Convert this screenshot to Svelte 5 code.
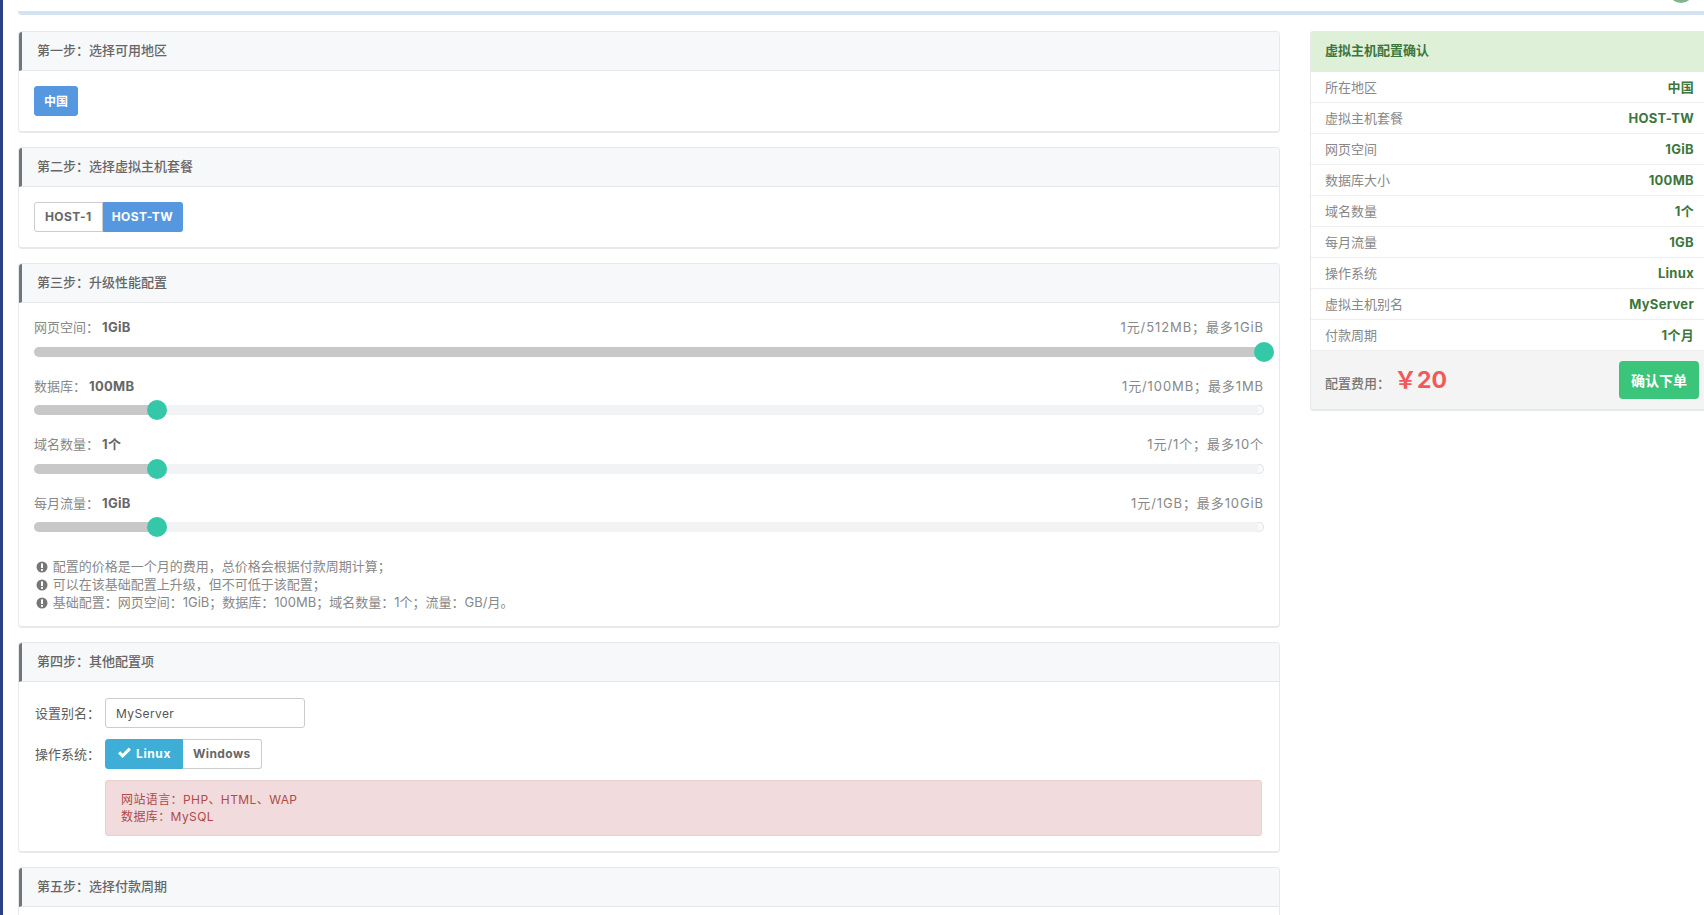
<script>
    // full-width punctuation, as the page uses it
    const colon = "\uFF1A";
    const semi = "\uFF1B";
    const comma = "\uFF0C";

    let summary = [
        ["所在地区", "中国"],
        ["虚拟主机套餐", "HOST-TW"],
        ["网页空间", "1GiB"],
        ["数据库大小", "100MB"],
        ["域名数量", "1个"],
        ["每月流量", "1GB"],
        ["操作系统", "Linux"],
        ["虚拟主机别名", "MyServer"],
        ["付款周期", "1个月"]
    ];

    let sliders = [
        { label: "网页空间", value: "1GiB", price: `1元/512MB${semi}最多1GiB`, percent: 100 },
        { label: "数据库", value: "100MB", price: `1元/100MB${semi}最多1MB`, percent: 10 },
        { label: "域名数量", value: "1个", price: `1元/1个${semi}最多10个`, percent: 10 },
        { label: "每月流量", value: "1GiB", price: `1元/1GB${semi}最多10GiB`, percent: 10 }
    ];

    let notes = [
        `配置的价格是一个月的费用${comma}总价格会根据付款周期计算${semi}`,
        `可以在该基础配置上升级${comma}但不可低于该配置${semi}`,
        `基础配置${colon}网页空间${colon}1GiB${semi}数据库${colon}100MB${semi}域名数量${colon}1个${semi}流量${colon}GB/月。`
    ];
</script>

<div class="page">
    <div class="topbar"><span class="avatar"></span></div>
    <div class="content">
        <div class="left">
            <section class="card">
                <h3>第一步{colon}选择可用地区</h3>
                <div class="body">
                    <button class="btn active small">中国</button>
                </div>
            </section>

            <section class="card">
                <h3>第二步{colon}选择虚拟主机套餐</h3>
                <div class="body">
                    <div class="group">
                        <button class="btn">HOST-1</button>
                        <button class="btn active">HOST-TW</button>
                    </div>
                </div>
            </section>

            <section class="card">
                <h3>第三步{colon}升级性能配置</h3>
                <div class="body sliders">
                    {#each sliders as s}
                        <div class="slider">
                            <div class="sliderHead">
                                <span>{s.label}{colon}<b>{s.value}</b></span>
                                <span class="latin">{s.price}</span>
                            </div>
                            <div class="track">
                                <div class="fill" style="width: {s.percent}%"></div>
                                <div class="thumb" style="left: {s.percent}%"></div>
                            </div>
                        </div>
                    {/each}
                    <ul class="notes">
                        {#each notes as note}
                            <li>
                                <svg viewBox="0 0 12 12" width="12" height="12">
                                    <circle cx="6" cy="6" r="5.5" fill="#777" />
                                    <rect x="5" y="2.4" width="2" height="4.6" fill="#fff" />
                                    <rect x="5" y="8" width="2" height="1.8" fill="#fff" />
                                </svg>
                                {note}
                            </li>
                        {/each}
                    </ul>
                </div>
            </section>

            <section class="card">
                <h3>第四步{colon}其他配置项</h3>
                <div class="body others">
                    <div class="formRow">
                        <label for="alias">设置别名{colon}</label>
                        <input id="alias" type="text" value="MyServer" />
                    </div>
                    <div class="formRow">
                        <span class="formLabel">操作系统{colon}</span>
                        <div class="group">
                            <button class="btn info">
                                <svg viewBox="0 0 16 13" width="15" height="12">
                                    <path d="M1 7l2.4-2.4L6 7.2 12.6.6 15 3 6 12z" fill="#fff" />
                                </svg>
                                Linux
                            </button>
                            <button class="btn">Windows</button>
                        </div>
                    </div>
                    <div class="alert">
                        网站语言{colon}PHP、HTML、WAP<br />
                        数据库{colon}MySQL
                    </div>
                </div>
            </section>

            <section class="card">
                <h3>第五步{colon}选择付款周期</h3>
                <div class="body lastBody"></div>
            </section>
        </div>

        <aside class="summary">
            <h3>虚拟主机配置确认</h3>
            {#each summary as row}
                <div class="row">
                    <span>{row[0]}</span>
                    <b>{row[1]}</b>
                </div>
            {/each}
            <div class="total">
                <span class="totalLabel">配置费用{colon}</span>
                <span class="price">{"\uFFE5"}20</span>
                <button class="order">确认下单</button>
            </div>
        </aside>
    </div>
</div>

<style>
    :global(body) {
        background: #fff;
        overflow: hidden;
    }

    .page {
        height: 915px;
        overflow: hidden;
        border-left: 3px solid #2c3e85;
        font-family: "Inter", "Noto Sans CJK SC", sans-serif;
        font-size: 13px;
        color: #777;
    }

    .topbar {
        height: 11px;
        margin-left: 15px;
        border-bottom: 4px solid #d3e3ef;
        border-bottom-left-radius: 4px;
        position: relative;
        overflow: hidden;
    }

    .avatar {
        position: absolute;
        right: 10px;
        top: -23px;
        width: 26px;
        height: 26px;
        border-radius: 50%;
        background: #7fb48f;
    }

    .content {
        display: flex;
        align-items: flex-start;
        padding: 16px 0 0 15px;
        gap: 30px;
    }

    .left {
        width: 1262px;
        flex-shrink: 0;
        display: flex;
        flex-direction: column;
        gap: 14px;
    }

    .card {
        background: #fff;
        border: 1px solid #e7eaec;
        border-bottom-width: 2px;
        border-radius: 4px;
    }

    .card h3 {
        margin: 0;
        height: 39px;
        line-height: 37px;
        box-sizing: border-box;
        padding-left: 15px;
        background: #f6f8fa;
        border-left: 3px solid #71777d;
        border-bottom: 1px solid #e3e7ea;
        border-top-left-radius: 3px;
        border-top-right-radius: 3px;
        font-size: 13px;
        font-weight: 500;
        color: #666;
    }

    .body {
        padding: 15px;
    }

    .lastBody {
        height: 60px;
    }

    .btn {
        height: 30px;
        padding: 0 10px 2px;
        border: 1px solid #ccc;
        background: #fff;
        border-radius: 3px;
        color: #666;
        font-family: inherit;
        font-size: 12px;
        font-weight: 700;
        letter-spacing: 0.4px;
        white-space: nowrap;
    }

    .btn.small {
        display: block;
        padding: 0 9px 2px;
        letter-spacing: 0;
    }

    .btn.active {
        background: #5598df;
        border-color: #5598df;
        color: #fff;
    }

    .group .btn.active {
        padding: 0 9px 2px;
    }

    .btn.info {
        display: flex;
        align-items: center;
        justify-content: center;
        gap: 4px;
        width: 78px;
        padding: 0 0 2px;
        letter-spacing: 0.6px;
        background: #3eaed6;
        border-color: #3eaed6;
        color: #fff;
    }

    .group {
        display: flex;
    }

    .group .btn:first-child {
        border-radius: 3px 0 0 3px;
    }

    .group .btn:last-child {
        border-radius: 0 3px 3px 0;
        border-left: none;
    }

    .sliders {
        padding: 15px 15px 15px;
    }

    .slider {
        margin-bottom: 20px;
    }

    .sliderHead {
        display: flex;
        justify-content: space-between;
        line-height: 18px;
        margin-bottom: 10.5px;
        color: #888;
    }

    .sliderHead b {
        color: #666;
        margin-left: 3px;
        letter-spacing: 0.3px;
    }

    .latin {
        letter-spacing: 0.9px;
    }

    .track {
        position: relative;
        height: 10px;
        border-radius: 5px;
        background: #f2f3f5;
    }

    /* little end cap of the range input */
    .track::after {
        content: "";
        position: absolute;
        right: 0;
        top: 0;
        width: 5px;
        height: 8px;
        border: 1px solid #e2e3e5;
        border-left: none;
        border-radius: 0 5px 5px 0;
        background: #fafafa;
    }

    .fill {
        height: 100%;
        border-radius: 5px;
        background: #c8c8c8;
    }

    .thumb {
        position: absolute;
        z-index: 1;
        top: -5px;
        width: 20px;
        height: 20px;
        margin-left: -10px;
        border-radius: 50%;
        background: #34c8a8;
    }

    .notes {
        list-style: none;
        margin: 25px 0 0;
        padding: 0 0 0 2px;
        font-size: 13px;
        line-height: 18px;
        color: #888;
    }

    .notes svg {
        vertical-align: -2px;
        margin-right: 1px;
    }

    .others {
        padding: 16px 17px 15px 16px;
    }

    .formRow {
        display: flex;
        align-items: center;
        height: 30px;
        margin-bottom: 11px;
    }

    .formRow label,
    .formLabel {
        width: 70px;
        margin-top: -2px;
        text-align: left;
        color: #5c5c5c;
    }

    .formRow input {
        width: 200px;
        height: 30px;
        box-sizing: border-box;
        padding: 0 10px;
        border: 1px solid #ccc;
        border-radius: 3px;
        font-family: inherit;
        font-size: 12px;
        letter-spacing: 0.4px;
        color: #555;
    }

    .alert {
        margin-left: 70px;
        padding: 10px 15px;
        height: 56px;
        box-sizing: border-box;
        font-size: 12px;
        letter-spacing: 0.4px;
        line-height: 17px;
        background: #f2dbdc;
        border: 1px solid #e8cfd0;
        border-radius: 3px;
        color: #b04a48;
    }

    .summary {
        flex: 1;
        margin-right: -6px;
        border: 1px solid #e7eaec;
        border-bottom-width: 2px;
        border-radius: 3px 0 0 3px;
    }

    .summary h3 {
        margin: 0;
        height: 40px;
        line-height: 37px;
        padding-left: 14px;
        background: #dff0d8;
        font-size: 13px;
        font-weight: 700;
        color: #3c763d;
    }

    .row {
        display: flex;
        justify-content: space-between;
        height: 31px;
        box-sizing: border-box;
        line-height: 30px;
        padding: 0 15px 0 14px;
        border-bottom: 1px solid #eee;
        color: #888;
    }

    .row b {
        color: #3c763d;
        letter-spacing: 0.3px;
    }

    .total {
        display: flex;
        align-items: center;
        height: 58px;
        padding-left: 14px;
        background: #f4f4f4;
    }

    .totalLabel {
        font-weight: 500;
        color: #777;
        margin-top: 4px;
    }

    .price {
        margin: 0 0 4px 4px;
        font-size: 23px;
        font-weight: 700;
        color: #f35958;
    }

    .order {
        margin-left: auto;
        margin-right: 10px;
        width: 80px;
        height: 38px;
        padding-bottom: 2px;
        border: none;
        border-radius: 4px;
        background: #3ac57a;
        color: #fff;
        font-family: inherit;
        font-size: 14px;
        font-weight: 700;
    }
</style>
